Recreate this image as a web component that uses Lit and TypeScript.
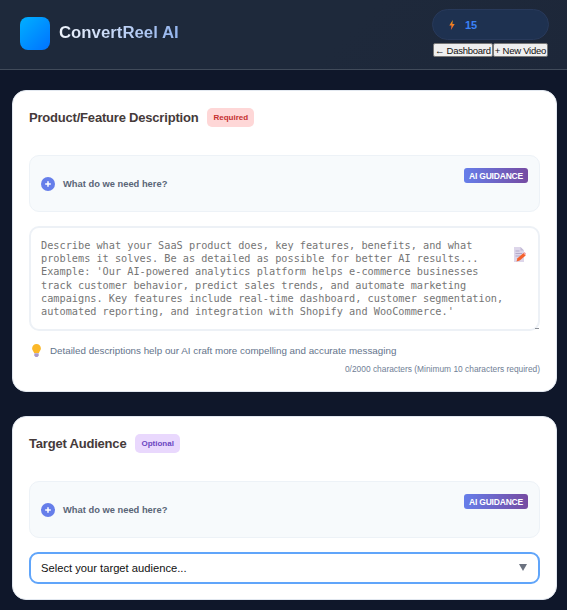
import { LitElement, html, css } from "lit";
import { customElement } from "lit/decorators.js";

const PLACEHOLDER =
  "Describe what your SaaS product does, key features, benefits, and what problems it solves. Be as detailed as possible for better AI results... Example: 'Our AI-powered analytics platform helps e-commerce businesses track customer behavior, predict sales trends, and automate marketing campaigns. Key features include real-time dashboard, customer segmentation, automated reporting, and integration with Shopify and WooCommerce.'";

@customElement("app-root")
export class AppRoot extends LitElement {
  static styles = css`
    :host {
      display: block;
      height: 610px;
      overflow: hidden;
      background: #0f172a;
      font-family: "Liberation Sans", Arial, sans-serif;
    }
    * { box-sizing: border-box; }
    .header {
      height: 70px;
      padding: 9px 18px 0 20px;
      display: flex;
      justify-content: space-between;
      background: linear-gradient(135deg, #1e293b, #1e293b 60%, #1d2739);
      border-bottom: 1px solid #414b5a;
    }
    .brand { display: flex; align-items: center; gap: 9px; height: 50px; margin-top: -1px; }
    .logo {
      width: 30px;
      height: 33px;
      border-radius: 8px;
      background: linear-gradient(135deg, #00b0ff, #0072ff);
    }
    .name {
      font-size: 16.8px;
      font-weight: 700;
      background: linear-gradient(90deg, #eef3fb, #93b4ee);
      -webkit-background-clip: text;
      background-clip: text;
      color: transparent;
    }
    .side { width: 117px; display: flex; flex-direction: column; gap: 3px; }
    .credits {
      height: 31px;
      border-radius: 16px;
      border: 1px solid #28395a;
      background: #1e3150;
      display: flex;
      align-items: center;
      padding-left: 16px;
      gap: 10px;
    }
    .bolt { display: block; }
    .count { font-size: 11px; font-weight: 700; color: #3b82f6; }
    .btns { display: flex; justify-content: center; }
    button {
      height: 14px;
      padding: 0 1px;
      font: 9.5px "Liberation Sans", Arial, sans-serif;
      letter-spacing: -0.25px;
      color: #111;
      background: #efefef;
      border: 1px solid #767676;
      border-radius: 2px;
      white-space: nowrap;
    }
    .main { padding: 20px 10px 0 11.5px; display: flex; flex-direction: column; gap: 24px; }
    .card {
      background: #fff;
      border-radius: 14px;
      border: 1px solid #e2e8f0;
      padding: 17px 16px 0 16.5px;
    }
    .one { height: 302px; }
    .two { height: 184px; }
    .head { display: flex; align-items: center; gap: 9px; height: 19px; }
    .title { font-size: 13px; font-weight: 700; color: #453a3a; letter-spacing: -0.2px; }
    .tag {
      font-size: 8px;
      font-weight: 700;
      height: 19px;
      display: flex;
      align-items: center;
      padding: 0 6px;
      border-radius: 5px;
    }
    .req { background: #fed7d7; color: #c53030; }
    .opt { background: #e9d8fd; color: #6b46c1; }
    .guide {
      position: relative;
      margin-top: 28px;
      height: 57px;
      background: #f7fafc;
      border: 1px solid #edf2f7;
      border-radius: 10px;
      padding: 0 11px;
      display: flex;
      align-items: center;
      gap: 8px;
    }
    .plus {
      width: 14px;
      height: 14px;
      border-radius: 50%;
      background: #667eea;
      display: flex;
      align-items: center;
      justify-content: center;
    }
    .plus svg { display: block; }
    .q { font-size: 9.35px; font-weight: 700; color: #5a6577; }
    .ai {
      position: absolute;
      top: 12px;
      right: 11px;
      height: 15px;
      width: 64px;
      display: flex;
      align-items: center;
      justify-content: center;
      border-radius: 3px;
      font-size: 8.5px;
      font-weight: 700;
      letter-spacing: -0.2px;
      color: #fff;
      background: linear-gradient(90deg, #667eea, #764ba2);
    }
    .field { position: relative; margin-top: 14px; }
    textarea {
      display: block;
      width: 100%;
      height: 105px;
      padding: 11px 31px 0 10px;
      border: 2px solid #edf1f6;
      border-radius: 10px;
      background: #fff;
      font: 10.24px/13.2px "DejaVu Sans Mono", monospace;
      color: #333;
      overflow: hidden;
      outline: none;
      resize: none;
    }
    textarea::placeholder { color: #757575; opacity: 1; }
    .grip { position: absolute; right: 1px; bottom: 2px; width: 4px; height: 1px; background: #8a8f96; }
    .note { position: absolute; top: 21px; right: 14px; display: block; }
    .hint {
      margin-top: 13px;
      padding-left: 3px;
      display: flex;
      align-items: center;
      gap: 9px;
      font-size: 9.8px;
      color: #64748b;
      height: 13px;
    }
    .bulb { display: block; flex: none; }
    .counter { margin-top: 7px; text-align: right; font-size: 8.4px; color: #718096; }
    .sel { position: relative; margin-top: 14px; }
    select {
      display: block;
      width: 100%;
      height: 32px;
      appearance: none;
      -webkit-appearance: none;
      padding: 0 10px 1px;
      border: 2px solid #60a5fa;
      border-radius: 9px;
      background: #fff;
      font: 11.2px "Liberation Sans", Arial, sans-serif;
      color: #111;
      outline: none;
    }
    .arrow { position: absolute; right: 13px; top: 12px; display: block; }
  `;

  private guide() {
    return html`<div class="guide">
      <span class="plus">
        <svg width="8" height="8" viewBox="0 0 8 8"><path d="M4 1.2v5.6M1.2 4h5.6" stroke="#fff" stroke-width="1.5" /></svg>
      </span>
      <span class="q">What do we need here?</span>
      <span class="ai">AI GUIDANCE</span>
    </div>`;
  }

  render() {
    return html`
      <header class="header">
        <div class="brand">
          <div class="logo"></div>
          <div class="name">ConvertReel AI</div>
        </div>
        <div class="side">
          <div class="credits">
            <svg class="bolt" width="6" height="10" viewBox="0 0 6 10">
              <defs><linearGradient id="b" x1="0" y1="0" x2="0" y2="1"><stop offset="0" stop-color="#f59e0b" /><stop offset="1" stop-color="#ef5a3c" /></linearGradient></defs>
              <path d="M3.8 0 .3 5.6h2.2L1.9 10l3.8-6H3.4z" fill="url(#b)" />
            </svg>
            <span class="count">15</span>
          </div>
          <div class="btns"><button>← Dashboard</button><button>+ New Video</button></div>
        </div>
      </header>
      <main class="main">
        <section class="card one">
          <div class="head"><span class="title">Product/Feature Description</span><span class="tag req">Required</span></div>
          ${this.guide()}
          <div class="field">
            <textarea placeholder=${PLACEHOLDER}></textarea>
            <svg class="note" width="13" height="15" viewBox="0 0 13 15">
              <path d="M1 0h6.5L11 3.5V15H1z" fill="#ddd6ea" />
              <path d="M7.5 0 11 3.5H7.5z" fill="#c4bbd6" />
              <path d="M2.5 4h4M2.5 6.5h6.5M2.5 9h5" stroke="#b3a9c9" stroke-width="1" />
              <path d="M3.5 14.5l1-3.2 6-5.3 2.2 2.4-6 5.2z" fill="#f4622e" />
              <path d="M10.5 6l1-.9 1.6 1.8-.9 1.1z" fill="#f59ca0" />
            </svg>
            <span class="grip"></span>
          </div>
          <div class="hint">
            <svg class="bulb" width="9" height="13" viewBox="0 0 9 13">
              <path d="M4.5 0a4.4 4.4 0 0 1 4.4 4.4c0 1.9-1.6 2.8-2 4.6H2.100C1.700 7.200.1 6.300.1 4.400A4.400 4.400 0 0 1 4.500 0z" fill="#fbb829" />
              <path d="M2.300 9.200h4.400v2.300L5.500 13h-2L2.300 11.500z" fill="#a99ac9" />
            </svg>
            <span>Detailed descriptions help our AI craft more compelling and accurate messaging</span>
          </div>
          <div class="counter">0/2000 characters (Minimum 10 characters required)</div>
        </section>
        <section class="card two">
          <div class="head"><span class="title">Target Audience</span><span class="tag opt">Optional</span></div>
          ${this.guide()}
          <div class="sel">
            <select><option>Select your target audience...</option></select>
            <svg class="arrow" width="8" height="7" viewBox="0 0 8 7"><path d="M0 0h8L4 7z" fill="#6b7280" /></svg>
          </div>
        </section>
      </main>
    `;
  }
}
